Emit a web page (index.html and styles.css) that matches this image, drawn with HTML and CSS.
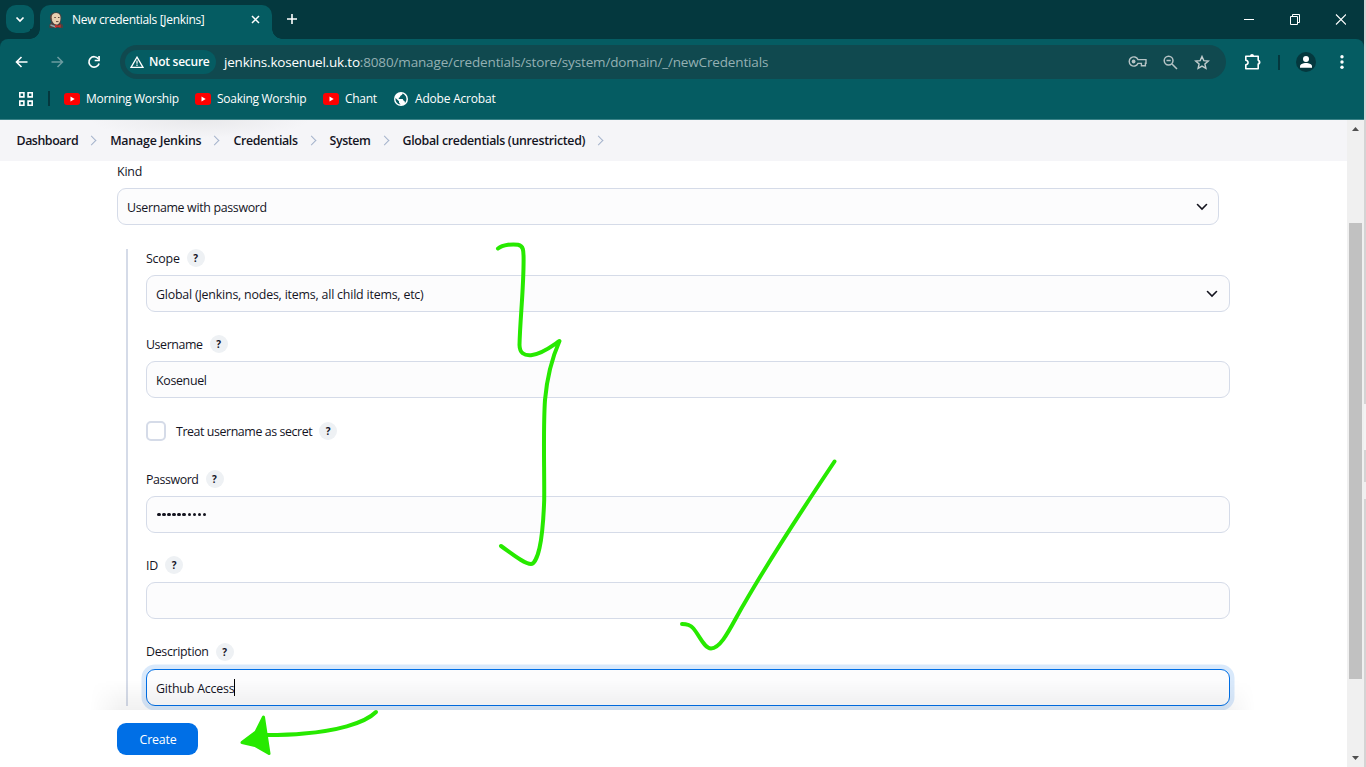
FILE: index.html
```html
<!DOCTYPE html>
<html lang="en">
<head>
<meta charset="utf-8">
<title>New credentials [Jenkins]</title>
<link rel="stylesheet" href="styles.css">
</head>
<body>
<div class="screen">
<div class="window">
  <header class="tabstrip">
    <div class="tab-search"><svg width="10" height="7" viewBox="0 0 10 7"><path d="M1.5 1.5 5 5l3.500-3.500" fill="none" stroke="#fff" stroke-width="1.700"/></svg></div>
    <div class="tab">
      <svg class="favicon" width="16" height="16" viewBox="0 0 16 16"><path d="M1.500 16c-.6-3 .2-4.500 2-5.500L2 7C1.500 3 4 .4 8 .3c4.500 0 6 3 5.200 6.700L12.500 11l2.500 2v3z" fill="#4c4140"/><path d="M3.500 5.500C3.500 2.500 5.500 1 8.300 1c3.200.2 4.400 2.500 4.200 5.500-.2 3.500-1.500 6-4 6-2.700 0-5-3.500-5-7z" fill="#e9cfb0"/><path d="M3.300 3C2.500 4.500 2.700 6 3.700 7.500M6.300 5.500h1.500M10 5.500h1.500M8 9.600h2.500" stroke="#5b4339" stroke-width="1" fill="none"/><path d="M2.500 13 8 15" stroke="#93a5ab" stroke-width="1.400" fill="none"/><path d="m7 12.500 2.800 1.200 2.900-1.200v3.200l-2.900-1-2.800 1z" fill="#c9302b"/></svg>
      <span class="tab-title t">New credentials [Jenkins]</span>
      <svg class="tab-close" width="9" height="9" viewBox="0 0 9 9"><path d="m1 1 7 7M8 1 1 8" stroke="#fff" stroke-width="1.500"/></svg>
    </div>
    <svg class="new-tab" width="12" height="12" viewBox="0 0 12 12"><path d="M6 1v10M1 6h10" stroke="#fff" stroke-width="1.600"/></svg>
    <div class="win-buttons">
      <svg width="11" height="11" viewBox="0 0 11 11"><path d="M1 5.500h10" stroke="#fff"/></svg>
      <svg width="11" height="11" viewBox="0 0 11 11"><path d="M1.500 2.500h7v8h-7zM3.500 2.500v-2h7v8h-2" stroke="#fff" fill="none"/></svg>
      <svg width="11" height="11" viewBox="0 0 11 11"><path d="m1 .5 10 10M11 .5 1 10.500" stroke="#fff" stroke-width="1.100"/></svg>
    </div>
  </header>
  <div class="toolbar">
    <div class="nav">
      <svg width="13" height="12" viewBox="0 0 13 12"><path d="M12.500 6H1.500M6.500 1l-5 5 5 5" fill="none" stroke="#fff" stroke-width="1.600"/></svg>
      <svg width="13" height="12" viewBox="0 0 13 12"><path d="M.5 6h11M6.500 1l5 5-5 5" fill="none" stroke="#6b9ca0" stroke-width="1.500"/></svg>
      <svg width="14" height="14" viewBox="0 0 14 14"><path d="M11.300 3.800A5.200 5.200 0 1 0 12.100 8.500" fill="none" stroke="#fff" stroke-width="1.700"/><path d="M12.900 1v5.300H7.700V4.700h3.500V1z" fill="#fff"/></svg>
    </div>
    <div class="omnibox">
      <div class="chip"><svg width="14" height="12" viewBox="0 0 14 12"><path d="M7 1.200 13 11.300H1z" fill="none" stroke="#fff" stroke-width="1.300"/><path d="M7 4.500v3.300M7 8.600v1.400" stroke="#fff" stroke-width="1.200"/></svg><b class="t">Not secure</b></div>
      <div class="url t"><span class="host t">jenkins.kosenuel.uk.to</span><span class="path t">:8080/manage/credentials/store/system/domain/_/newCredentials</span></div>
      <div class="omni-icons">
        <svg width="19" height="12" viewBox="0 0 19 12"><path d="M10 3.600h8v3.600h-.6v2.600h-4V7.400H10A4.600 4.600 0 1 1 10 3.600z" fill="none" stroke="#b6c3c5" stroke-width="1.400"/><circle cx="5.600" cy="5.500" r="1.900" fill="#b6c3c5"/></svg>
        <svg width="15" height="15" viewBox="0 0 15 15"><circle cx="5.600" cy="5.600" r="4.400" fill="none" stroke="#b6c3c5" stroke-width="1.500"/><path d="m9 9 5 5M3.500 5.600h4.200" stroke="#b6c3c5" stroke-width="1.500"/></svg>
        <svg width="16" height="15" viewBox="0 0 16 15"><path d="m8 1.500 1.800 4.100 4.500.4-3.400 3 1 4.400L8 11.100l-3.900 2.300 1-4.400-3.400-3 4.500-.4z" fill="none" stroke="#c2cdce" stroke-width="1.400"/></svg>
      </div>
    </div>
    <svg class="ext" width="17" height="18" viewBox="0 0 17 18"><path d="M1.800 3.300h12.400v3.900a2 2 0 0 1 0 3.900v4.600H1.800v-3.900c3-.5 3-4 0-4.500z" fill="none" stroke="#fff" stroke-width="1.600" stroke-linejoin="round"/><path d="M6 3a2 2 0 0 1 4 0zM14.500 7.200a2 2 0 0 1 0 3.900z" fill="#fff"/></svg>
    <div class="divider"></div>
    <svg class="avatar" width="20" height="20" viewBox="0 0 20 20"><circle cx="10" cy="10" r="10" fill="#04383e"/><circle cx="10" cy="7" r="3" fill="#fff"/><path d="M4 15.800v-1.500c0-2 3-3.300 6-3.300s6 1.300 6 3.300v1.500z" fill="#fff"/></svg>
    <svg class="menu" width="4" height="14" viewBox="0 0 4 14"><circle cx="2" cy="1.700" r="1.700" fill="#fff"/><circle cx="2" cy="7" r="1.700" fill="#fff"/><circle cx="2" cy="12.300" r="1.700" fill="#fff"/></svg>
  </div>
  <div class="bookmarks">
    <svg width="14" height="14" viewBox="0 0 14 14"><path d="M.8.8h4.100v4.100H.8zM9.100.8h4.100v4.100H9.100zM.8 9.100h4.100v4.100H.8zM9.100 9.100h4.100v4.100H9.100z" fill="none" stroke="#fff" stroke-width="1.600"/></svg>
    <div class="divider"></div>
    <div class="bm b1"><svg width="16" height="12" viewBox="0 0 16 12"><rect width="16" height="12" rx="3" fill="#f00"/><path d="M6.500 3.500v5l4.200-2.500z" fill="#fff"/></svg><span class="t">Morning Worship</span></div>
    <div class="bm b2"><svg width="16" height="12" viewBox="0 0 16 12"><rect width="16" height="12" rx="3" fill="#f00"/><path d="M6.500 3.500v5l4.200-2.500z" fill="#fff"/></svg><span class="t">Soaking Worship</span></div>
    <div class="bm b3"><svg width="16" height="12" viewBox="0 0 16 12"><rect width="16" height="12" rx="3" fill="#f00"/><path d="M6.500 3.500v5l4.200-2.500z" fill="#fff"/></svg><span class="t">Chant</span></div>
    <div class="bm globe"><svg width="14" height="14" viewBox="0 0 14 14"><circle cx="7" cy="7" r="7" fill="#fff"/><path d="M1.500 6 5 9.200v1.500l1.600 1.700C3.500 12.500 1 9.500 1.500 6zM8.500 1.600C8.500 3.500 7 3.200 6.300 4c-.5.600.2 1.300-.8 1.600-1 .2-1 .9-.5 1.400h3.600c.8.700.3 1.600 1.400 1.800.8.200.7 1.200 1 2.300 2.500-3 2-7.500-2.500-9.500z" fill="#055c62"/></svg><span class="t">Adobe Acrobat</span></div>
  </div>
  <div class="viewport">
    <main class="page">
      <nav class="crumbs">
        <span class="t c1">Dashboard</span><i></i><span class="t c2">Manage Jenkins</span><i></i><span class="t c3">Credentials</span><i></i><span class="t c4">System</span><i></i><span class="t c5">Global credentials (unrestricted)</span><i></i>
      </nav>
      <form class="form">
        <div class="label"><span class="t">Kind</span></div>
        <div class="field kind"><span class="t">Username with password</span><svg width="12" height="8" viewBox="0 0 12 8"><path d="m1.500 1.500 4.500 4.500 4.500-4.500" fill="none" stroke="#14141f" stroke-width="1.600" stroke-linecap="round"/></svg></div>
        <section class="nested">
          <div class="group"><div class="label"><span class="t">Scope</span><em>?</em></div>
            <div class="field"><span class="t">Global (Jenkins, nodes, items, all child items, etc)</span><svg width="12" height="8" viewBox="0 0 12 8"><path d="m1.500 1.500 4.500 4.500 4.500-4.500" fill="none" stroke="#14141f" stroke-width="1.600" stroke-linecap="round"/></svg></div></div>
          <div class="group"><div class="label"><span class="t tight">Username</span><em>?</em></div><div class="field"><span class="t snug">Kosenuel</span></div></div>
          <div class="check"><div class="box"></div><span class="t tight">Treat username as secret</span><em>?</em></div>
          <div class="group"><div class="label"><span class="t tight">Password</span><em>?</em></div><div class="field"><span class="dots"><u></u><u></u><u></u><u></u><u></u><u></u><u></u><u></u><u></u><u></u></span></div></div>
          <div class="group id"><div class="label"><span class="t">ID</span><em>?</em></div><div class="field"></div></div>
          <div class="group desc"><div class="label"><span class="t snug">Description</span><em>?</em></div><div class="field focus"><span class="t">Github Access</span><div class="caret"></div></div></div>
        </section>
      </form>
      <div class="fade"></div>
      <footer class="actions"><div class="create"><span class="t">Create</span></div></footer>
    </main>
    <div class="scrollbar">
      <svg width="7" height="4" viewBox="0 0 7 4"><path d="M0 4 3.500 0 7 4z" fill="#505050"/></svg>
      <div class="thumb"></div>
      <svg width="7" height="4" viewBox="0 0 7 4"><path d="M0 0 3.500 4 7 0z" fill="#505050"/></svg>
    </div>
  </div>
</div>
<div class="edge"></div>
<svg class="ink" width="1366" height="767" viewBox="0 0 1366 767">
  <g fill="none" stroke="#27e900" stroke-width="4" stroke-linecap="round" stroke-linejoin="round">
    <path d="M498 248.500C503 244.500 513 244 518 244.800C523.500 246 523.600 250 523.600 260C523.600 290 520 320 519.500 345C519.700 353 524 355.700 531 355.200C542 354.300 552 346 559.500 341C552 358 547 377 545 400C543 430 544.500 470 544.200 500C543.500 520 542 537 539.500 548C537.500 557 534 564 531 564C524 564 511 553 501 546"/>
    <path d="M682 624C687 624 690 624.500 693 628C699 634.500 704 648.500 711 648.500C722 648.500 732 624 744 604C771 557 798 516 834.500 461.500"/>
    <path d="M376 712C364 724 334 731 304 733.500C290 735 278 735 266 735"/>
  </g>
  <path d="M263.500 717 269 753.500 255 745.500 242 742.500 256 732z" fill="#27e900" stroke="#27e900" stroke-width="3" stroke-linejoin="round"/>
</svg>
</div>
</body>
</html>
```
FILE: styles.css
```css
* { box-sizing: border-box; }
body { margin: 0; font: 12.4px/18px "Open Sans", "Noto Sans", sans-serif; color: #14141f; }
svg { display: block; flex: none; }
.t { white-space: nowrap; flex: none; letter-spacing: -0.2px; }
.screen { position: relative; display: flex; width: 1366px; height: 767px; overflow: hidden; background: #fff; }
.window { width: 1364px; display: flex; flex-direction: column; background: #04383e; }
.edge { width: 2px; background: linear-gradient(#d4d4d4 404px, #f3f3f3 404px 450px, #d4d4d4 450px 482px, #f0f0f0 482px 499px, #d4d4d4 499px); }
.ink { position: absolute; left: 0; top: 0; pointer-events: none; }

.tabstrip { height: 39px; display: flex; align-items: flex-start; padding: 5px 18px 0 6px; color: #fff; }
.tab-search { width: 28px; height: 28px; border-radius: 10px; background: #055c62; display: grid; place-items: center; }
.tab { position: relative; width: 232px; height: 34px; margin-left: 6px; padding: 0 12px 4px 8px; border-radius: 10px 10px 0 0; background: #055c62; display: flex; align-items: center; }
.tab::before, .tab::after { content: ""; position: absolute; bottom: 0; width: 10px; height: 10px; }
.tab::before { left: -10px; background: radial-gradient(circle at 0 0, #04383e 9.500px, #055c62 10px); }
.tab::after { right: -10px; background: radial-gradient(circle at 100% 0, #04383e 9.500px, #055c62 10px); }
.tab-title { margin-left: 8px; font-size: 12px; letter-spacing: -0.32px; }
.tab-close { margin-left: auto; margin-bottom: 1px; }
.new-tab { margin: 8px 0 0 14px; }
.win-buttons { margin: 9px 0 0 auto; display: flex; gap: 35px; }

.toolbar { height: 46px; display: flex; align-items: center; background: #055c62; border-radius: 8px 8px 0 0; padding: 0 20px 0 15px; }
.nav { width: 105px; display: flex; align-items: center; gap: 23px; }
.omnibox { width: 1106px; height: 34px; border-radius: 17px; background: #10494f; display: flex; align-items: center; padding: 0 16px 0 5px; color: #fff; }
.chip { width: 91px; height: 24px; border-radius: 12px; background: #055c62; display: flex; align-items: center; gap: 5px; padding-left: 5px; }
.chip b { font-size: 12px; font-weight: 600; letter-spacing: -0.25px; }
.url { margin-left: 8px; font-size: 13.500px; }
.path { color: #94b0b3; letter-spacing: -0.15px; }
.omni-icons { margin-left: auto; display: flex; align-items: center; gap: 16px; }
.ext { margin-left: 18px; }
.divider { width: 2px; height: 15px; background: #04383e; }
.toolbar .divider { margin-left: 17px; }
.avatar { margin-left: 16px; }
.menu { margin-left: auto; }
.bookmarks { height: 35px; display: flex; align-items: center; padding: 0 0 7px 19px; background: #055c62; border-bottom: 1px solid #3b8388; color: #fff; }
.bookmarks .divider { margin: 0 14px 0 15px; }
.bm { display: flex; align-items: center; gap: 6px; flex: none; font-size: 12px; }
.bm .t { letter-spacing: -0.28px; }
.b1 { width: 131px; }
.b2 { width: 128px; }
.b3 { width: 71px; }
.bm.globe { width: 110px; gap: 7px; }
.bm.globe .t { letter-spacing: -0.2px; }

.viewport { flex: 1; min-height: 0; display: flex; background: #fff; }
.page { position: relative; width: 1347px; display: flex; flex-direction: column; overflow: hidden; }
.crumbs { height: 41px; flex: none; background: radial-gradient(ellipse 110px 18px at 50% 0, #e9e9eb, rgba(245,245,248,0)) 90px 0 / 220px 30px no-repeat, #f5f5f8; display: flex; align-items: center; padding-left: 16.500px; font-size: 12.400px; font-weight: 600; }
.crumbs .c1 { letter-spacing: -0.45px; }
.crumbs .c3 { letter-spacing: -0.36px; }
.crumbs .c4 { letter-spacing: -0.4px; }
.crumbs .c5 { letter-spacing: -0.31px; }
.crumbs i { width: 7px; height: 7px; border: solid #a5b3cc; border-width: 1.500px 1.500px 0 0; transform: rotate(45deg); margin: 0 15px 0 10px; }
.form { flex: 1; padding: 1px 0 0 117px; }
.label { height: 18px; margin-bottom: 8px; display: flex; align-items: center; gap: 7px; }
.label .t, .check .t { padding-top: 2px; }
.desc .label .t { padding-top: 0; }
.field { height: 37px; border: 1px solid #d5dbe8; border-radius: 9px; background: #fcfcfd; display: flex; align-items: center; padding: 0 11px 0 9px; }
.field .t { padding-top: 2px; }
.field svg { margin-left: auto; }
.kind { width: 1102px; padding-right: 10px; }
.kind .t { letter-spacing: -0.33px; }
.form .tight { letter-spacing: -0.42px; }
.form .snug { letter-spacing: -0.32px; }
.nested { width: 1104px; height: 457px; margin: 24px 0 0 9px; border-left: 2px solid #d5dbe8; padding-left: 18px; display: flex; flex-direction: column; }
.group { margin-bottom: 23px; flex: none; }
.group.id { margin-bottom: 24px; }
em { width: 18px; height: 18px; border-radius: 50%; background: #eef1f4; font: 700 10px/18px "Open Sans", sans-serif; text-align: center; flex: none; }
.check { height: 20px; flex: none; display: flex; align-items: center; gap: 7px; margin-bottom: 29px; }
.box { width: 20px; height: 20px; border: 2px solid #d5dbe8; border-radius: 5px; margin-right: 3px; }
.dots { display: flex; gap: 1.600px; padding-left: 1px; }
.dots u { width: 3.500px; height: 3.500px; border-radius: 50%; background: #14141f; }
.focus { border-color: #006fe6; box-shadow: 0 0 0 4.500px #d9e9fb; }
.caret { width: 1px; height: 17px; background: #000; }
.fade { position: absolute; left: 90px; top: 560px; width: 1165px; height: 30px; background: linear-gradient(rgba(0,0,0,0), rgba(0,0,0,.055)); -webkit-mask-image: linear-gradient(90deg, transparent, #000 32px, #000 1133px, transparent); mask-image: linear-gradient(90deg, transparent, #000 32px, #000 1133px, transparent); }
.actions { height: 57px; position: relative; flex: none; background: #fff; padding: 13px 0 0 117px; }
.create { width: 81px; height: 32px; border-radius: 9px; background: #006fe6; color: #fff; display: grid; place-items: center; padding: 2px 0 0 1px; }
.scrollbar { width: 17px; background: #f0f0f0; display: flex; flex-direction: column; align-items: center; padding: 7px 0; }
.thumb { width: 13px; height: 456px; margin: 92px 0 auto; background: #c1c1c1; }
```
